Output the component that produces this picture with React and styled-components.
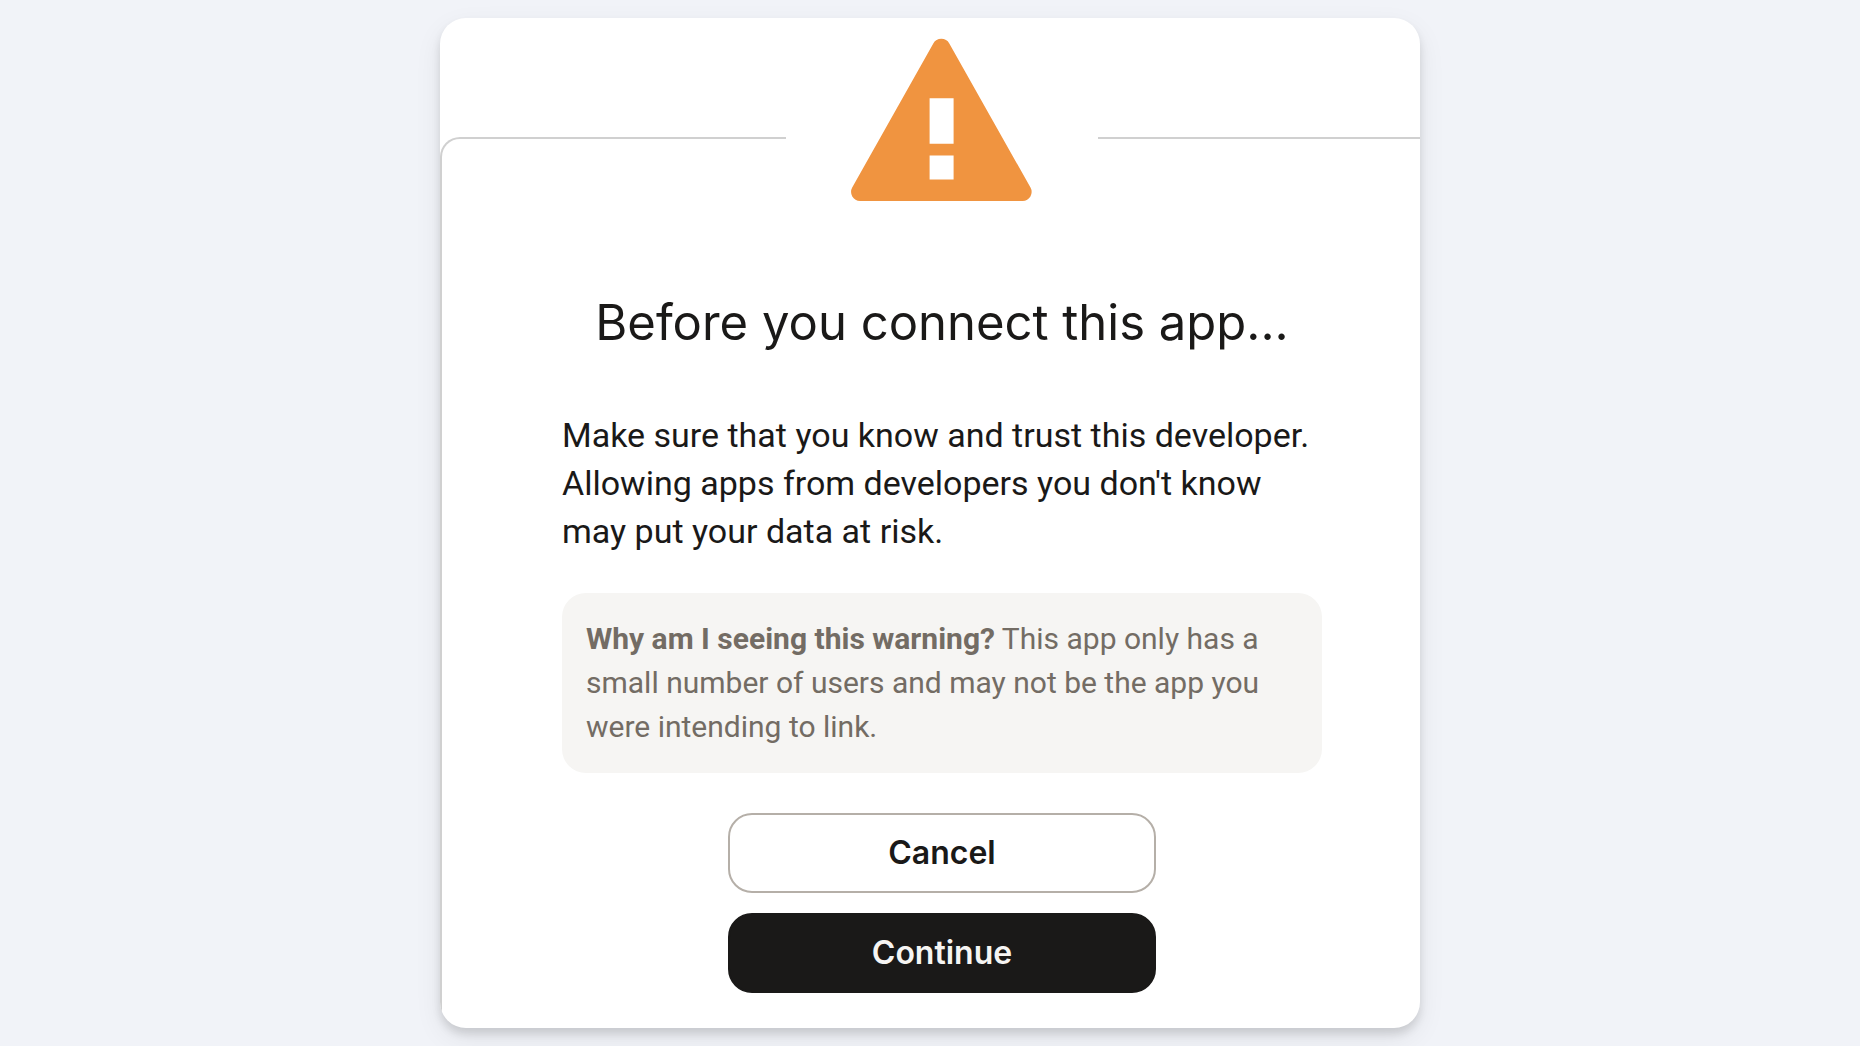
import React from "react";
import styled, { createGlobalStyle } from "styled-components";

const GlobalStyle = createGlobalStyle`
  *,
  *::before,
  *::after {
    box-sizing: border-box;
  }
  body {
    margin: 0;
    background: #f1f3f8;
    color: #1a1918;
    font-family: Roboto, "Liberation Sans", sans-serif;
  }
`;

const App = () => {
  return (
    <>
      <GlobalStyle />
      <Wrapper>
        <Card>
          <Panel>
            <IconHolder>
              <WarningIcon />
            </IconHolder>
            <Title>Before you connect this app...</Title>
            <Text>
              Make sure that you know and trust this developer. Allowing apps
              from developers you don't know may put your data at risk.
            </Text>
            <Notice>
              <strong>Why am I seeing this warning?</strong> This app only has a
              small number of users and may not be the app you were intending to
              link.
            </Notice>
            <Actions>
              <Button type="button">Cancel</Button>
              <Button type="button" $primary>
                Continue
              </Button>
            </Actions>
          </Panel>
        </Card>
      </Wrapper>
    </>
  );
};

const WarningIcon = () => (
  <svg width="184" height="164" viewBox="0 0 184 164" aria-hidden="true">
    <path
      fill="#f09440"
      d="M83.3 5.5a9.2 9.2 0 0 1 16 0L180.5 149.6A9 9 0 0 1 172.7 163H10A9 9 0 0 1 2.2 149.6Z"
    />
    <path fill="#fff" d="M79.6 60.3h24v45.4h-24zM79.6 117.4h24v24.2h-24z" />
  </svg>
);

const Wrapper = styled.main`
  min-height: 100vh;
  display: flex;
  justify-content: center;
  align-items: flex-start;
  padding: 18px;
`;

const Card = styled.section`
  width: 100%;
  max-width: 980px;
  padding-top: 119px;
  background: #fff;
  border-radius: 26px;
  overflow: hidden;
  box-shadow: 0 6px 8px rgba(0, 0, 0, 0.12), 0 10px 28px rgba(0, 0, 0, 0.07);
`;

// runs past the right edge of the card, which clips it
const Panel = styled.div`
  display: flex;
  flex-direction: column;
  align-items: center;
  margin-right: -24px;
  padding: 0 120px 35px;
  border: 2px solid #d0d0d0;
  border-bottom: none;
  border-top-left-radius: 20px;
`;

const IconHolder = styled.div`
  display: flex;
  margin-top: -101px;
  padding: 0 64px;
  background: #fff;
`;

const Title = styled.h1`
  margin: 93px 0 60px;
  font-family: Inter, "Liberation Sans", sans-serif;
  font-size: 49px;
  font-weight: 400;
  line-height: 56px;
  text-align: center;
`;

const Text = styled.p`
  margin: 0 0 38px;
  width: 100%;
  font-size: 34px;
  line-height: 48px;
`;

const Notice = styled.p`
  margin: 0 0 40px;
  width: 100%;
  padding: 24px;
  background: #f6f5f3;
  border-radius: 24px;
  color: #736c64;
  font-size: 30px;
  line-height: 44px;

  strong {
    font-weight: 700;
  }
`;

const Actions = styled.div`
  display: flex;
  flex-direction: column;
  gap: 20px;
  width: 100%;
  max-width: 428px;
`;

const Button = styled.button`
  height: 80px;
  padding: 0 24px 2px;
  border: 2px solid ${({ $primary }) => ($primary ? "#1a1918" : "#b5afa8")};
  border-radius: 24px;
  background: ${({ $primary }) => ($primary ? "#1a1918" : "#fff")};
  color: ${({ $primary }) => ($primary ? "#f6f5f3" : "#1a1918")};
  font-family: Inter, "Liberation Sans", sans-serif;
  font-size: 32px;
  font-weight: 600;
  cursor: pointer;
`;

export default App;
